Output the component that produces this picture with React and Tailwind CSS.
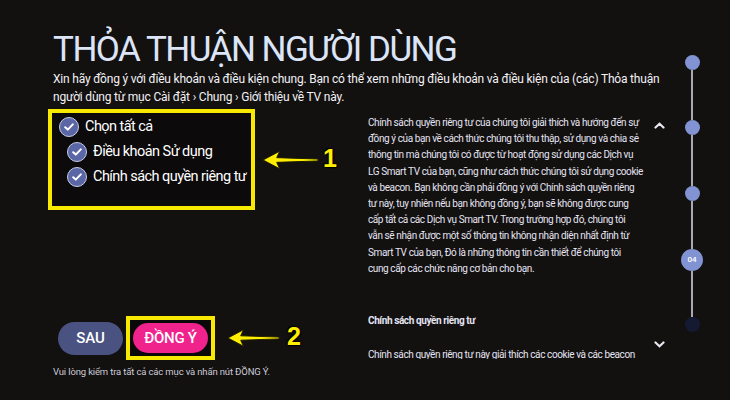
import React from 'react';

const policyLines = [
  'Chính sách quyền riêng tư của chúng tôi giải thích và hướng đến sự',
  'đồng ý của bạn về cách thức chúng tôi thu thập, sử dụng và chia sẻ',
  'thông tin mà chúng tôi có được từ hoạt động sử dụng các Dịch vụ',
  'LG Smart TV của bạn, cũng như cách thức chúng tôi sử dụng cookie',
  'và beacon. Bạn không cần phải đồng ý với Chính sách quyền riêng',
  'tư này, tuy nhiên nếu bạn không đồng ý, bạn sẽ không được cung',
  'cấp tất cả các Dịch vụ Smart TV. Trong trường hợp đó, chúng tôi',
  'vẫn sẽ nhận được một số thông tin không nhận diện nhất định từ',
  'Smart TV của bạn, Đó là những thông tin cần thiết để chúng tôi',
  'cung cấp các chức năng cơ bản cho bạn.',
];

const Check = ({ label, indent }) => (
  <div className={`flex items-center h-[25px] ${indent ? 'pl-[15px]' : 'pl-[7px]'}`}>
    <div className="w-[20px] h-[20px] rounded-full bg-[#5a66a6] border-[1.5px] border-[#c9cde6] flex items-center justify-center shrink-0">
      <svg width="10" height="8" viewBox="0 0 10 8">
        <path d="M1.2 4.2 L3.8 6.6 L8.8 1.4" fill="none" stroke="#fff" strokeWidth="2" strokeLinecap="round" strokeLinejoin="round" />
      </svg>
    </div>
    <span className="ml-[6px] text-[14.5px] text-white tracking-[-0.55px] whitespace-nowrap">{label}</span>
  </div>
);

const YellowArrow = ({ width }) => (
  <svg width={width} height="22" viewBox="0 0 58 22">
    <path
      d="M1 11 L18 2 L15 8.6 L57 10 L57 12 L15 13.4 L18 20 Z"
      fill="#ffee00"
      stroke="#1a1a00"
      strokeWidth="1"
      strokeLinejoin="round"
    />
  </svg>
);

const Num = ({ children }) => (
  <span className="text-[25px] font-bold leading-none text-[#ffee00] [font-family:'Liberation_Sans',sans-serif] [text-shadow:0_0_2px_#000,1px_1px_1px_#000,-1px_-1px_1px_#000]">
    {children}
  </span>
);

const Dot = ({ big, dark, children }) => (
  <div
    className={`rounded-full flex items-center justify-center shrink-0 ${
      big ? 'w-[22px] h-[22px]' : 'w-[15px] h-[15px]'
    } ${dark ? 'bg-[#151a33]' : 'bg-[#8193d3]'}`}
  >
    {children}
  </div>
);

const Seg = ({ h }) => <div className="w-[2px] bg-[#a8a9b4]" style={{ height: h }} />;

export default function App() {
  return (
    <div className="w-[730px] h-[400px] bg-[#131010] overflow-hidden flex [font-family:Roboto,'Noto_Sans',sans-serif]">
      {/* Main */}
      <div className="flex-1 pl-[53px] pt-[32px]">
        <h1 className="text-[35px] leading-[35px] text-[#dce5f8] tracking-[-1.5px] whitespace-nowrap">
          THỎA THUẬN NGƯỜI DÙNG
        </h1>
        <p className="mt-[3px] text-[12px] leading-[18px] text-[#f2f2f5] tracking-[-0.2px]">
          Xin hãy đồng ý với điều khoản và điều kiện chung. Bạn có thể xem những điều khoản và điều kiện của (các) Thỏa thuận
          <br />
          người dùng từ mục Cài đặt › Chung › Giới thiệu về TV này.
        </p>

        <div className="flex mt-[3px]">
          {/* Left column */}
          <div className="w-[315px] flex flex-col">
            <div className="flex items-center -ml-[5px]">
              <div className="w-[207px] h-[101px] border-4 border-[#f7ea00] bg-[#0c0a0a] pt-[1px]">
                <Check label="Chọn tất cả" />
                <Check label="Điều khoản Sử dụng" indent />
                <Check label="Chính sách quyền riêng tư" indent />
              </div>
              <div className="ml-[7px] flex items-center">
                <YellowArrow width={57} />
                <span className="ml-[4px]">
                  <Num>1</Num>
                </span>
              </div>
            </div>

            <div className="flex items-center mt-[106px] h-[44px]">
              <button className="w-[65px] h-[33px] ml-[5px] rounded-full bg-[#4a5282] text-white text-[15px] font-medium">
                SAU
              </button>
              <div className="ml-[3px] w-[89px] h-[44px] border-4 border-[#f7ea00] bg-[#0a0808] flex items-center justify-center">
                <button className="w-[75px] h-[30px] rounded-full bg-[#f0228c] text-white text-[15px] font-medium tracking-[-0.3px]">
                  ĐỒNG Ý
                </button>
              </div>
              <div className="ml-[12px] flex items-center">
                <YellowArrow width={53} />
                <span className="ml-[7px]">
                  <Num>2</Num>
                </span>
              </div>
            </div>

            <p className="mt-[5px] text-[9.5px] leading-[14px] text-[#cacbd6] tracking-[-0.15px] whitespace-nowrap">
              Vui lòng kiểm tra tất cả các mục và nhấn nút ĐỒNG Ý.
            </p>
          </div>

          {/* Policy text */}
          <div className="w-[282px] h-[250px] overflow-hidden pt-[6px] text-[10px] leading-[16.2px] text-[#e4e4f2] tracking-[-0.4px]">
            {policyLines.map((line) => (
              <div key={line} className="whitespace-nowrap">
                {line}
              </div>
            ))}
            <div className="mt-[36px] font-bold whitespace-nowrap">Chính sách quyền riêng tư</div>
            <div className="mt-[18px] whitespace-nowrap">
              Chính sách quyền riêng tư này giải thích các cookie và các beacon
            </div>
          </div>

          {/* Scroll chevrons */}
          <div className="w-[18px] h-[249px] flex flex-col items-center justify-between pt-[13px] pb-[10px]">
            <svg width="11" height="7" viewBox="0 0 11 7">
              <path d="M1.5 5.5 L5.5 1.8 L9.5 5.5" fill="none" stroke="#e8e8f0" strokeWidth="2.2" strokeLinecap="round" />
            </svg>
            <svg width="11" height="7" viewBox="0 0 11 7">
              <path d="M1.5 1.5 L5.5 5.2 L9.5 1.5" fill="none" stroke="#e8e8f0" strokeWidth="2.2" strokeLinecap="round" />
            </svg>
          </div>
        </div>
      </div>

      {/* Timeline */}
      <div className="w-[24px] mr-[26px] pt-[55px] flex flex-col items-center">
        <Dot />
        <Seg h={50} />
        <Dot />
        <Seg h={51} />
        <Dot />
        <Seg h={48} />
        <Dot big>
          <span className="text-[8px] text-white font-medium leading-none">04</span>
        </Dot>
        <Seg h={46} />
        <Dot dark />
      </div>
    </div>
  );
}
